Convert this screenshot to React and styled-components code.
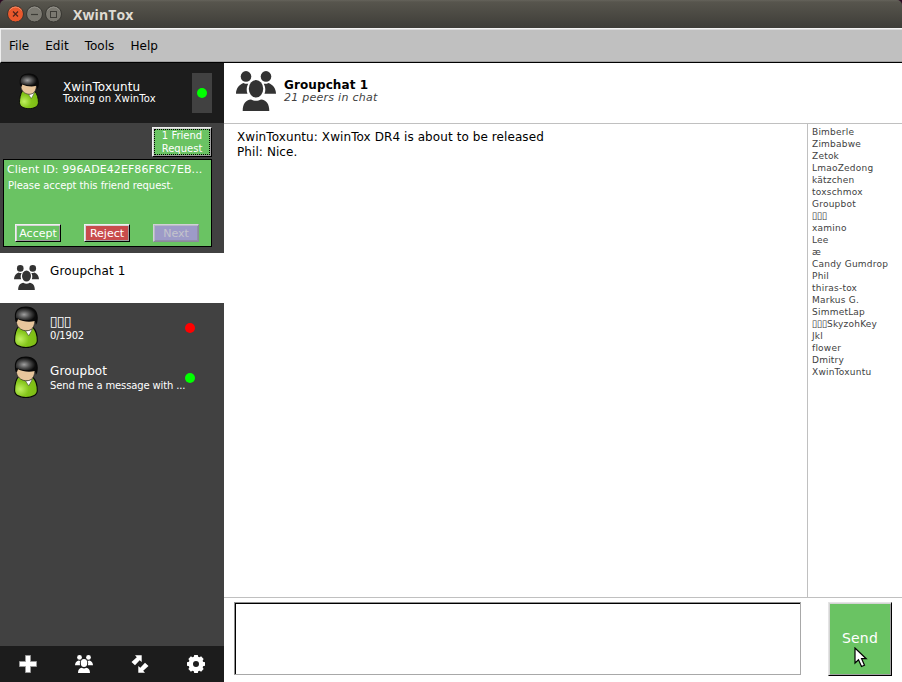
import React from 'react';
import styled, { createGlobalStyle } from 'styled-components';

const Global = createGlobalStyle`
  * { box-sizing: border-box; }
  body { margin: 0; background: #fff; overflow: hidden; font-family: "DejaVu Sans", sans-serif; font-size: 12px; color: #000; }
  svg { display: block; flex: none; }
  button { font-family: inherit; margin: 0; padding: 0; }
`;

const Window = styled.div`
  width: 902px; height: 682px; display: flex; flex-direction: column; background: #fff;
`;
const TitleBar = styled.header`
  height: 28px; flex: none; display: flex; align-items: center; gap: 2px; padding: 0 6px 0 7px;
  background: linear-gradient(#65635b 0, #57554d 2px, #3e3d38 100%);
  border-radius: 5px 5px 0 0;
`;
const Corner = styled.div`background: #2b0a22;`;
const WinTitle = styled.h1`
  margin: 0 0 0 9px; font: bold 14px/18px "Open Sans", sans-serif; color: #dfdbd2; letter-spacing: 0.1px; padding-top: 2px;
`;
const MenuBar = styled.nav`
  height: 35px; flex: none; display: flex; gap: 16px; padding: 8px 0 0 8px; background: #c0c0c0;
  border-top: 1px solid #f4f4f4; border-left: 1px solid #eee; border-bottom: 1px solid #000;
  box-shadow: inset 0 1px #dcdcdc, inset 0 -1px #a0a0a0; letter-spacing: 0.04px;
`;
const MenuItem = styled.span`line-height: 18px;`;
const Body = styled.div`flex: 1; min-height: 0; display: flex;`;

const Sidebar = styled.aside`
  width: 224px; flex: none; display: flex; flex-direction: column; background: #414141; color: #fff;
`;
const Profile = styled.section`
  height: 60px; flex: none; display: flex; align-items: flex-start; background: #1c1c1c; padding: 10px 12px 0 19px;
`;
const ProfileText = styled.div`flex: 1; padding: 7px 0 0 24px;`;
const Name = styled.div`height: 14px; font-size: 12px; line-height: 14px; white-space: nowrap; letter-spacing: 0.12px;`;
const Status = styled.div`
  font-size: 10px; line-height: 12px; white-space: nowrap; margin-top: ${p => p.$gap || 0}px;
  letter-spacing: ${p => p.$track || 0}px;
`;
const StatusBox = styled.div`
  width: 20px; height: 40px; background: #414141; display: grid; place-items: center;
`;
const Dot = styled.i`display: block; width: 10px; height: 10px; border-radius: 50%; background: ${p => p.$color};`;

const Requests = styled.section`
  height: 130px; flex: none; padding: 4px 12px 0 3px; display: flex; flex-direction: column;
`;
const Raised = styled.button`
  background: ${p => p.$bg || '#6ac363'}; color: #fff; border: 1px solid; border-color: #f0f0f0 #000 #000 #f0f0f0;
  box-shadow: inset 1px 1px #d4d4d4, inset -1px -1px #a0a0a0;
`;
const RequestToggle = styled(Raised)`
  align-self: flex-end; width: 60px; height: 30px; padding: 1px; font-size: 10px;
`;
const Focus = styled.span`display: block; height: 26px; border: 1px dotted #000; line-height: 13px;`;
const FocusText = styled.span`display: block; margin-top: -1px;`;
const RequestCard = styled.div`
  height: 88px; margin-top: 2px; background: #6ac363; border: 1px solid #000; padding: 3px 3px 0; display: flex; flex-direction: column;
`;
const ClientId = styled.div`font-size: 11px; line-height: 14px; white-space: nowrap; letter-spacing: 0.09px;`;
const RequestText = styled.div`
  font-size: 10px; line-height: 14px; padding: 2px 0 0 1px; flex: 1; letter-spacing: -0.06px; white-space: nowrap;
`;
const RequestActions = styled.div`display: flex; gap: 23px; padding: 0 0 4px 8px;`;
const SmallButton = styled(Raised)`
  width: 46px; height: 18px; padding-top: 1px; font-size: 11px; line-height: 15px;
  ${p => p.disabled && 'color: #c4c4cc; border-color: #d0d0d8 #8a8a9a #8a8a9a #d0d0d8; box-shadow: inset 1px 1px #b8b8c8, inset -1px -1px #9090a8;'}
`;

const Contacts = styled.div`flex: 1;`;
const Contact = styled.div`
  height: 50px; display: flex; align-items: flex-start; padding-left: 14px;
  background: ${p => (p.$active ? '#fff' : 'transparent')}; color: ${p => (p.$active ? '#000' : '#fff')};
`;
const Portrait = styled.div`width: 36px; padding-top: ${p => p.$top}px;`;
const ContactText = styled.div`width: 135px; padding-top: 11px;`;
const ContactDot = styled.div`padding-top: 20px;`;

const Toolbar = styled.footer`
  height: 36px; flex: none; background: #1c1c1c; display: grid; grid-template-columns: repeat(4, 56px); place-items: center;
`;

const Main = styled.main`flex: 1; min-width: 0; display: flex; flex-direction: column;`;
const ChatHeader = styled.header`
  height: 61px; flex: none; display: flex; padding: 8px 0 0 12px; border-bottom: 1px solid #c0c0c0;
`;
const ChatTitleBox = styled.div`padding: 7px 0 0 8px;`;
const ChatTitle = styled.h2`margin: 0; font-size: 12px; line-height: 14px; letter-spacing: 0.1px;`;
const Peers = styled.div`font-size: 11px; font-style: italic; line-height: 12px; color: #414141; letter-spacing: 0.26px;`;
const ChatBody = styled.div`flex: 1; display: flex; min-height: 0;`;
const Messages = styled.div`flex: 1; padding: 6px 13px; line-height: 15px; letter-spacing: 0.085px;`;
const UserList = styled.ul`
  width: 95px; margin: 0; padding: 2px 0 0 4px; list-style: none; border-left: 1px solid #c0c0c0;
  font-size: 9px; line-height: 12px; color: #414141; white-space: nowrap; letter-spacing: 0.22px;
`;
const User = styled.li`height: 12px; display: flex;`;
const BoxGlyph = styled.span`
  display: inline-flex; justify-content: center; width: ${p => p.$w}px; font-size: ${p => p.$size}px; letter-spacing: 0;
`;
const Composer = styled.section`
  height: 85px; flex: none; border-top: 1px solid #c0c0c0; display: flex; justify-content: space-between; padding: 4px 10px 0;
`;
const Input = styled.div`
  width: 567px; height: 73px; border: 1px solid; border-color: #909090 #a8a8a8 #a8a8a8 #909090;
  box-shadow: inset 1px 1px #000; background: #fff;
`;
const SendButton = styled(Raised)`
  position: relative; width: 64px; height: 74px; padding-bottom: 2px; font-size: 14px; line-height: 68px;
  border-color: #e4e4e4 #000 #000 #e4e4e4; letter-spacing: 0.2px;
`;
const Pointer = styled.svg`position: absolute; left: 25px; top: 44px;`;

const WinButton = ({ kind }) => (
  <svg width="17" height="18" viewBox="0 0 17 18">
    <circle cx="8.5" cy="9" r="8" fill={kind === 'close' ? '#e9582c' : '#7b7971'} stroke="#363530" />
    <path d="M2.5 5.5a7 7 0 0 1 12 0" fill="none" stroke={kind === 'close' ? '#f58e68' : '#95938b'} />
    {kind === 'close' && <path d="M6 6.500l5 5m0-5l-5 5" stroke="#50241a" strokeWidth="1.300" />}
    {kind === 'min' && <path d="M5 9.500h7" stroke="#3d3c37" strokeWidth="1.200" />}
    {kind === 'max' && <rect x="5.500" y="6.500" width="6" height="6" fill="none" stroke="#3d3c37" />}
  </svg>
);

const Avatar = ({ w, h, id }) => (
  <svg width={w} height={h} viewBox="0 0 24 42" preserveAspectRatio="none">
    <defs>
      <radialGradient id={id + 'h'} cx=".4" cy=".55" r=".55"><stop offset="0" stopColor="#a0a0a0" /><stop offset=".5" stopColor="#505050" /><stop offset="1" stopColor="#0c0c0c" /></radialGradient>
      <radialGradient id={id + 'b'} cx=".25" cy=".6" r=".75"><stop offset="0" stopColor="#c0f060" /><stop offset=".5" stopColor="#84c51a" /><stop offset="1" stopColor="#7dbb14" /></radialGradient>
    </defs>
    <path d="M4.500 20.500C1.500 24 .6 30 .6 34.500.6 44 23.300 44 23.300 34.500c0-5-1.300-10-4.300-13z" fill={`url(#${id}b)`} stroke="#080808" strokeWidth="1.100" />
    <path d="M11.500 25l3.300 4.800 3.700-6.800z" fill="#fff" stroke="#333" strokeWidth=".5" />
    <path d="M2.300 11C1.800 17 3 20.500 6.500 23c4 2.600 9.500 2.300 12-.8 2-2.400 2.700-6.200 2.500-11z" fill="#e8c69c" stroke="#222" strokeWidth=".7" />
    <path d="M1.500 15.500C-.8 5.500 3 .5 12 .5s13.300 6 11.300 15.500c-.3 1.300-.8 2-1.500 2.700-.2-1.700-.4-2.700-1-3.700C15 16.300 8.500 15.500 4 13.300L3 16z" fill="#080808" />
    <path d="M2 12C1.300 5 5 1.600 12 1.600s11.300 4 10.200 12C16 15 8 14.500 2 12z" fill={`url(#${id}h)`} />
  </svg>
);

const Group = ({ s, color = '#333' }) => (
  <svg width={s} height={s} viewBox="0 0 40 40" fill={color}>
    <circle cx="10" cy="5.400" r="5.300" /><circle cx="30" cy="5.400" r="5.300" />
    <path d="M0 22.700c0-5 3-9 7.500-10.700 1.200.8 3 1 4.800.8C10.800 15 10 19.500 11.500 22.700zM40 22.700c0-5-3-9-7.500-10.700-1.200.8-3 1-4.800.8 1.500 2.200 2.300 6.700.8 9.900z" />
    <ellipse cx="20" cy="17.700" rx="7.200" ry="8.800" />
    <path d="M6.700 40c0-7.500 3-11 8.300-11.600 3 1.900 7 1.900 10 0 5.300.6 8.300 4.100 8.300 11.600z" />
  </svg>
);

const Boxes = ({ w, size }) => [0, 1, 2].map(i => <BoxGlyph key={i} $w={w} $size={size}>▯</BoxGlyph>);

const users = ['Bimberle', 'Zimbabwe', 'Zetok', 'LmaoZedong', 'kätzchen', 'toxschmox', 'Groupbot', '▯▯▯', 'xamino', 'Lee', 'æ', 'Candy Gumdrop', 'Phil', 'thiras-tox', 'Markus G.', 'SimmetLap', '▯▯▯SkyzohKey', 'Jkl', 'flower', 'Dmitry', 'XwinToxuntu'];

const gearTeeth = [0, 45, 90, 135, 180, 225, 270, 315];
const arrow = 'M4 .2H10.700V7L8.700 5.300 4 10.200.5 7 5.800 2.200z';

export default function App() {
  return (
    <>
      <Global />
      <Window>
        <Corner>
          <TitleBar>
            <WinButton kind="close" /><WinButton kind="min" /><WinButton kind="max" />
            <WinTitle>XwinTox</WinTitle>
          </TitleBar>
        </Corner>
        <MenuBar>
          {['File', 'Edit', 'Tools', 'Help'].map(m => <MenuItem key={m}>{m}</MenuItem>)}
        </MenuBar>
        <Body>
          <Sidebar>
            <Profile>
              <Avatar w={20} h={36} id="me" />
              <ProfileText>
                <Name>XwinToxuntu</Name>
                <Status $gap={-1} $track={0.12}>Toxing on XwinTox</Status>
              </ProfileText>
              <StatusBox><Dot $color="#0f0" /></StatusBox>
            </Profile>
            <Requests>
              <RequestToggle><Focus><FocusText>1 Friend<br />Request</FocusText></Focus></RequestToggle>
              <RequestCard>
                <ClientId>Client ID: 996ADE42EF86F8C7EB...</ClientId>
                <RequestText>Please accept this friend request.</RequestText>
                <RequestActions>
                  <SmallButton>Accept</SmallButton>
                  <SmallButton $bg="#c84c4c">Reject</SmallButton>
                  <SmallButton $bg="#9d9bc8" disabled>Next</SmallButton>
                </RequestActions>
              </RequestCard>
            </Requests>
            <Contacts>
              <Contact $active>
                <Portrait $top={12}><Group s={25} /></Portrait>
                <ContactText><Name>Groupchat 1</Name></ContactText>
              </Contact>
              <Contact>
                <Portrait $top={3}><Avatar w={24} h={42} id="a" /></Portrait>
                <ContactText><Name><Boxes w={7} size={14} /></Name><Status $gap={2} $track={-0.2}>0/1902</Status></ContactText>
                <ContactDot><Dot $color="#f00" /></ContactDot>
              </Contact>
              <Contact>
                <Portrait $top={3}><Avatar w={24} h={42} id="b" /></Portrait>
                <ContactText><Name>Groupbot</Name><Status $gap={2} $track={-0.13}>Send me a message with ...</Status></ContactText>
                <ContactDot><Dot $color="#0f0" /></ContactDot>
              </Contact>
            </Contacts>
            <Toolbar>
              <svg width="18" height="18" viewBox="0 0 18 18"><path d="M6.500 0.500h5v6h6v5h-6v6h-5v-6h-6v-5h6z" fill="#fff" stroke="#999" /></svg>
              <Group s={18} color="#fff" />
              <svg width="18" height="18" viewBox="0 0 18 18" fill="#fff">
                <path d={arrow} /><path d={arrow} transform="rotate(180 9 9)" />
              </svg>
              <svg width="18" height="18" viewBox="-9 -9 18 18" fill="#fff">
                {gearTeeth.map(a => <path key={a} d="M-2.500-6L-1.800-9h3.600L2.500-6z" transform={`rotate(${a})`} />)}
                <circle r="5.200" fill="none" stroke="#fff" strokeWidth="4.400" />
              </svg>
            </Toolbar>
          </Sidebar>
          <Main>
            <ChatHeader>
              <Group s={40} />
              <ChatTitleBox>
                <ChatTitle>Groupchat 1</ChatTitle>
                <Peers>21 peers in chat</Peers>
              </ChatTitleBox>
            </ChatHeader>
            <ChatBody>
              <Messages>
                <div>XwinToxuntu: XwinTox DR4 is about to be released</div>
                <div>Phil: Nice.</div>
              </Messages>
              <UserList>
                {users.map(u => (
                  <User key={u}>{u.startsWith('▯') && <Boxes w={5} size={10} />}{u.replace(/▯/g, '')}</User>
                ))}
              </UserList>
            </ChatBody>
            <Composer>
              <Input />
              <SendButton>
                Send
                <Pointer width="14" height="21" viewBox="0 0 14 21">
                  <path d="M1 1v15l3.500-3.300L7.500 19.500l3-1.300L7.600 11.700h4.600z" fill="#fff" stroke="#000" strokeWidth="1.200" />
                </Pointer>
              </SendButton>
            </Composer>
          </Main>
        </Body>
      </Window>
    </>
  );
}
